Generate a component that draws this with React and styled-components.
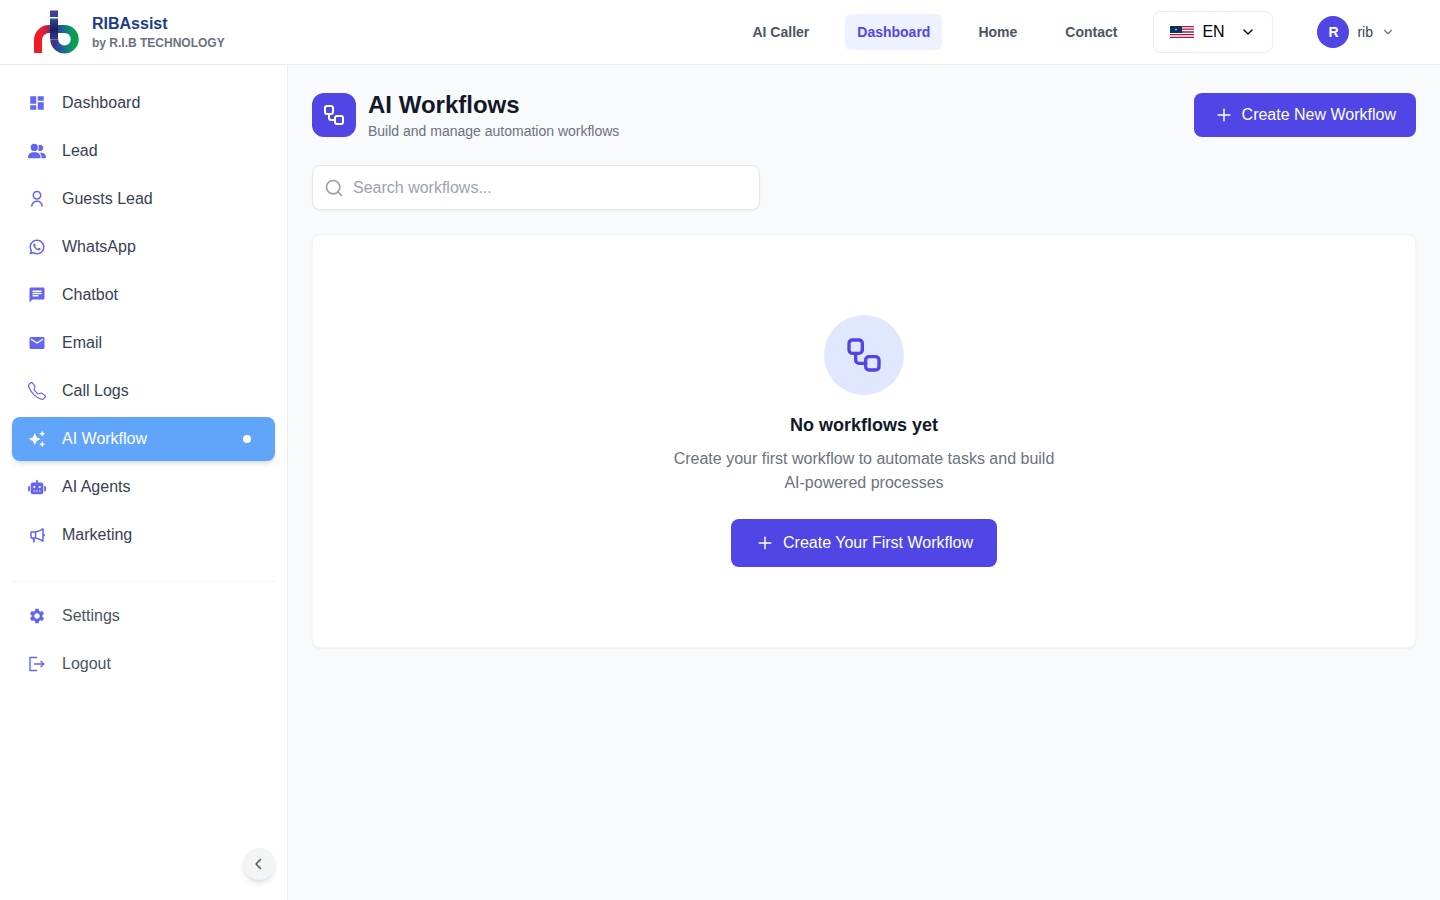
import React from 'react'
import styled, { createGlobalStyle, css } from 'styled-components'
import { ChevronDown, Plus, Search, Workflow } from 'lucide-react'
import {
  MdAutoAwesome,
  MdChat,
  MdDashboard,
  MdEmail,
  MdSettings,
} from 'react-icons/md'
import { FaChevronLeft, FaRobot, FaUserGroup } from 'react-icons/fa6'
import { RiMegaphoneLine, RiUserLine, RiWhatsappLine } from 'react-icons/ri'
import { BsTelephone } from 'react-icons/bs'

const mainLinks = [
  { label: 'Dashboard', icon: MdDashboard },
  { label: 'Lead', icon: FaUserGroup },
  { label: 'Guests Lead', icon: RiUserLine },
  { label: 'WhatsApp', icon: RiWhatsappLine },
  { label: 'Chatbot', icon: MdChat },
  { label: 'Email', icon: MdEmail },
  { label: 'Call Logs', icon: BsTelephone },
  { label: 'AI Workflow', icon: MdAutoAwesome, active: true },
  { label: 'AI Agents', icon: FaRobot },
  { label: 'Marketing', icon: RiMegaphoneLine },
]

const footerLinks = [
  { label: 'Settings', icon: MdSettings },
  { label: 'Logout', icon: LogoutIcon },
]

const topLinks = [
  { label: 'AI Caller' },
  { label: 'Dashboard', active: true },
  { label: 'Home' },
  { label: 'Contact' },
]

export default function App() {
  return (
    <>
      <GlobalStyle />
      <Page>
        <Header />
        <Body>
          <Sidebar />
          <Workflows />
        </Body>
      </Page>
    </>
  )
}

function Header() {
  return (
    <TopBar>
      <Brand href="#">
        <Logo />
        <span>
          <BrandName>RIBAssist</BrandName>
          <BrandOwner>by R.I.B TECHNOLOGY</BrandOwner>
        </span>
      </Brand>
      <TopNav>
        {topLinks.map(({ label, active }) => (
          <TopLink key={label} href="#" $active={active}>
            {label}
          </TopLink>
        ))}
      </TopNav>
      <Language>
        <Flag />
        <LanguageSelect aria-label="Language" defaultValue="EN">
          <option>EN</option>
        </LanguageSelect>
        <ChevronDown size={16} />
      </Language>
      <Account type="button">
        <Avatar>R</Avatar>
        rib
        <ChevronDown size={14} color="#6b7280" />
      </Account>
    </TopBar>
  )
}

function Sidebar() {
  return (
    <Aside>
      <SideList>
        {mainLinks.map((link) => (
          <SideItem key={link.label} {...link} />
        ))}
      </SideList>
      <SideFooter>
        {footerLinks.map((link) => (
          <SideItem key={link.label} {...link} muted />
        ))}
      </SideFooter>
      <Collapse type="button" aria-label="Collapse sidebar">
        <FaChevronLeft size={12} />
      </Collapse>
    </Aside>
  )
}

function SideItem({ label, icon: Icon, active, muted }) {
  return (
    <SideLink href="#" $active={active} $muted={muted}>
      <Icon size={18} />
      <span>{label}</span>
      {active ? <Dot /> : null}
    </SideLink>
  )
}

function Workflows() {
  return (
    <Main>
      <PageHead>
        <PageIcon>
          <Workflow size={24} />
        </PageIcon>
        <PageTitles>
          <Title>AI Workflows</Title>
          <Subtitle>Build and manage automation workflows</Subtitle>
        </PageTitles>
        <PrimaryButton type="button">
          <Plus size={20} strokeWidth={1.8} />
          Create New Workflow
        </PrimaryButton>
      </PageHead>
      <SearchBox>
        <Search size={20} />
        <SearchInput
          type="search"
          aria-label="Search workflows"
          placeholder="Search workflows..."
        />
      </SearchBox>
      <EmptyCard>
        <EmptyIcon>
          <Workflow size={40} />
        </EmptyIcon>
        <EmptyTitle>No workflows yet</EmptyTitle>
        <EmptyText>
          Create your first workflow to automate tasks and build AI-powered
          processes
        </EmptyText>
        <PrimaryButton type="button" $large>
          <Plus size={20} strokeWidth={1.8} />
          Create Your First Workflow
        </PrimaryButton>
      </EmptyCard>
    </Main>
  )
}

function Logo() {
  return (
    <svg width="48" height="48" viewBox="0 0 48 48" fill="none" aria-hidden="true">
      <defs>
        <linearGradient id="arch" x1="2" y1="0" x2="46" y2="0" gradientUnits="userSpaceOnUse">
          <stop offset="0.2" stopColor="#f01c26" />
          <stop offset="0.46" stopColor="#37348f" />
          <stop offset="0.64" stopColor="#1f5f9a" />
          <stop offset="0.88" stopColor="#07a052" />
        </linearGradient>
        <linearGradient id="stem" x1="0" y1="2" x2="0" y2="34" gradientUnits="userSpaceOnUse">
          <stop offset="0" stopColor="#4b3a94" />
          <stop offset="0.3" stopColor="#2b4a94" />
          <stop offset="0.6" stopColor="#191f5c" />
          <stop offset="1" stopColor="#37429b" />
        </linearGradient>
      </defs>
      <path
        d="M6 45V32a11 11 0 0 1 11-11h15.500a10.250 10.250 0 1 1-10.250 10.250"
        stroke="url(#arch)"
        strokeWidth="8"
      />
      <path d="M18 10.500h8v20.500h-8z" fill="url(#stem)" />
      <path d="M18 2.500h8v6.500h-8z" fill="url(#stem)" />
    </svg>
  )
}

function Flag() {
  return (
    <svg width="24" height="12" viewBox="0 0 24 12" aria-hidden="true">
      <path d="M0 0h24v12H0z" fill="#fff" />
      <path
        d="M0 .5h24M0 3.200h24M0 6h24M0 8.700h24M0 11.500h24"
        stroke="#b3193f"
        strokeWidth="1.300"
      />
      <path d="M0 0h12v7H0z" fill="#0a3161" />
      <circle cx="6" cy="3.500" r="0.800" fill="#fff" />
    </svg>
  )
}

function LogoutIcon({ size }) {
  return (
    <svg
      width={size}
      height={size}
      viewBox="0 0 18 18"
      fill="none"
      stroke="currentColor"
      strokeWidth="1.400"
      aria-hidden="true"
    >
      <path d="M9 2.500H2V15.500H9M6 9H15.500M12.700 6L15.700 9L12.700 12" />
    </svg>
  )
}

const GlobalStyle = createGlobalStyle`
  *, *::before, *::after {
    box-sizing: border-box;
  }
  body {
    margin: 0;
    background: #f9fafb;
    color: #111827;
    font-family: 'Liberation Sans', Arial, sans-serif;
    font-size: 16px;
    line-height: 24px;
  }
  button, input, select {
    font: inherit;
    color: inherit;
  }
  a {
    color: inherit;
    text-decoration: none;
  }
  svg {
    display: block;
    flex-shrink: 0;
  }
`

const Page = styled.div`
  display: flex;
  flex-direction: column;
  min-height: 100vh;
`

const TopBar = styled.header`
  display: flex;
  align-items: center;
  height: 65px;
  padding: 0 37px 0 32px;
  background: white;
  border-bottom: 1px solid #e9ebef;
`

const Brand = styled.a`
  display: flex;
  align-items: center;
  gap: 12px;
  margin-right: auto;
`

const BrandName = styled.span`
  display: block;
  padding-top: 2px;
  color: #1e3a8a;
  font-weight: 700;
  line-height: 20px;
`

const BrandOwner = styled.span`
  display: block;
  color: #6b7280;
  font-size: 12px;
  font-weight: 700;
  line-height: 18px;
`

const TopNav = styled.nav`
  display: flex;
  gap: 24px;
  margin-right: 24px;
`

const TopLink = styled.a`
  padding: 8px 12px;
  border-radius: 6px;
  color: #4b5563;
  font-size: 14px;
  font-weight: 700;
  line-height: 20px;
  ${({ $active }) =>
    $active &&
    css`
      background: #eef2ff;
      color: #4f46e5;
    `}
`

const Language = styled.div`
  display: flex;
  align-items: center;
  width: 120px;
  height: 42px;
  padding: 0 16px;
  border: 1px solid #e5effe;
  border-radius: 8px;
  color: black;
`

const LanguageSelect = styled.select`
  appearance: none;
  flex: 1;
  min-width: 0;
  padding: 0 0 0 8px;
  border: 0;
  background: none;
`

const Account = styled.button`
  display: flex;
  align-items: center;
  gap: 8px;
  margin-left: 36px;
  padding: 4px 8px;
  border: 0;
  background: none;
  color: #374151;
  font-size: 14px;
`

const Avatar = styled.span`
  display: grid;
  place-items: center;
  width: 32px;
  height: 32px;
  border-radius: 50%;
  background: #4f46e5;
  color: white;
  font-weight: 700;
`

const Body = styled.div`
  display: flex;
  flex: 1;
`

const Aside = styled.aside`
  display: flex;
  flex-direction: column;
  flex-shrink: 0;
  width: 288px;
  padding: 16px 12px 20px;
  background: white;
  border-right: 1px solid #e9ebef;
`

const SideList = styled.nav`
  display: flex;
  flex-direction: column;
  gap: 4px;
`

const SideFooter = styled(SideList)`
  margin-top: 24px;
  padding-top: 12px;
  border-top: 1px solid #f3f4f6;
`

const SideLink = styled.a`
  display: flex;
  align-items: center;
  gap: 16px;
  height: 44px;
  padding: 0 16px;
  border-radius: 8px;
  color: ${({ $muted }) => ($muted ? '#4b5563' : '#374151')};
  svg {
    color: #6366f1;
  }
  ${({ $active }) =>
    $active &&
    css`
      background: #60a5fa;
      color: white;
      box-shadow: 0 4px 6px -1px rgba(0, 0, 0, 0.1),
        0 2px 4px -2px rgba(0, 0, 0, 0.1);
      svg {
        color: white;
      }
    `}
`

const Dot = styled.span`
  width: 8px;
  height: 8px;
  margin-left: auto;
  margin-right: 8px;
  border-radius: 50%;
  background: white;
`

const Collapse = styled.button`
  display: grid;
  place-items: center;
  width: 32px;
  height: 32px;
  margin-top: auto;
  margin-left: auto;
  padding: 0;
  border: 0;
  border-radius: 50%;
  background: #f3f4f6;
  color: #4b5563;
  box-shadow: 0 4px 6px -1px rgba(0, 0, 0, 0.1),
    0 2px 4px -2px rgba(0, 0, 0, 0.1);
`

const Main = styled.main`
  flex: 1;
  min-width: 0;
  padding: 24px;
`

const PageHead = styled.div`
  display: flex;
  align-items: center;
  gap: 12px;
  margin-bottom: 24px;
`

const PageIcon = styled.div`
  display: grid;
  place-items: center;
  width: 44px;
  height: 44px;
  border-radius: 12px;
  background: #4f46e5;
  color: white;
`

const PageTitles = styled.div`
  flex: 1;
`

const Title = styled.h1`
  margin: 0;
  font-size: 24px;
  font-weight: 700;
  line-height: 32px;
`

const Subtitle = styled.p`
  margin: 0;
  color: #6b7280;
  font-size: 14px;
  line-height: 20px;
`

const PrimaryButton = styled.button`
  display: flex;
  align-items: center;
  gap: 8px;
  padding: ${({ $large }) => ($large ? '12px 24px' : '10px 20px')};
  border: 0;
  border-radius: 8px;
  background: #4f46e5;
  color: white;
`

const SearchBox = styled.label`
  display: flex;
  align-items: center;
  gap: 9px;
  max-width: 448px;
  height: 45px;
  margin-bottom: 24px;
  padding: 0 11px;
  border: 1px solid #e5e7eb;
  border-radius: 8px;
  background: white;
  color: #9ca3af;
  box-shadow: 0 1px 2px rgba(0, 0, 0, 0.05);
`

const SearchInput = styled.input`
  flex: 1;
  min-width: 0;
  padding: 0;
  border: 0;
  outline: 0;
  background: none;
  color: #111827;
  &::placeholder {
    color: #9ca3af;
  }
`

const EmptyCard = styled.section`
  display: flex;
  flex-direction: column;
  align-items: center;
  padding: 80px 24px;
  border: 1px solid #f3f4f6;
  border-radius: 8px;
  background: white;
  box-shadow: 0 1px 2px rgba(0, 0, 0, 0.05);
  text-align: center;
`

const EmptyIcon = styled.div`
  display: grid;
  place-items: center;
  width: 80px;
  height: 80px;
  margin-bottom: 16px;
  border-radius: 50%;
  background: #e0e7ff;
  color: #4f46e5;
`

const EmptyTitle = styled.h2`
  margin: 0 0 8px;
  font-size: 18px;
  font-weight: 700;
  line-height: 28px;
`

const EmptyText = styled.p`
  max-width: 384px;
  margin: 0 0 24px;
  color: #6b7280;
`
